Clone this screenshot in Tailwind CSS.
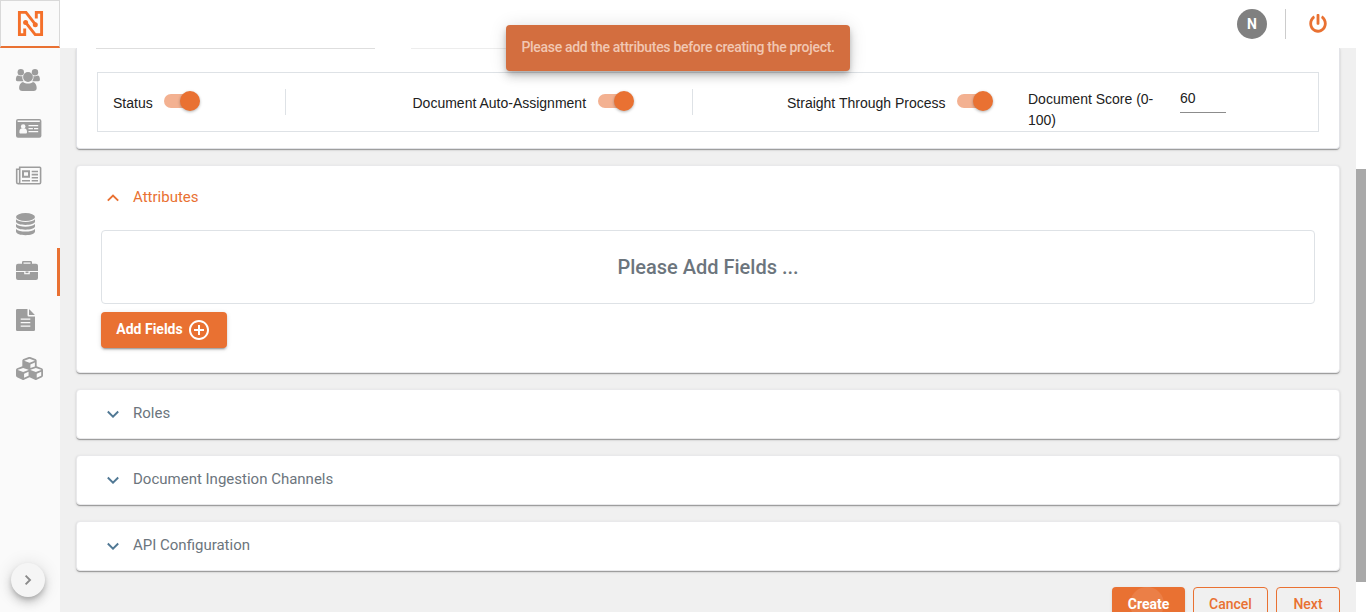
<!DOCTYPE html>
<html lang="en">
<head>
<meta charset="utf-8">
<title>Project</title>
<script src="https://cdn.jsdelivr.net/npm/@tailwindcss/browser@4"></script>
</head>
<body class="relative flex h-[612px] w-[1366px] overflow-hidden bg-white font-['Roboto',sans-serif]">
<aside class="relative flex h-full w-[60px] shrink-0 flex-col bg-[#fafafa] text-[#9d9d9d]">
  <div class="h-12 border border-b-2 border-[#d9d9d9] border-b-[#e97132]">
    <svg class="block h-[45px] w-[58px]" viewBox="1 1 58 45" fill="none" stroke="#f4702a" stroke-width="2.900">
      <path d="M24.700 28.500V34.600H19.400V12.400H26L35.500 24.700M36.300 18.500V12.400H41.600V34.600H35.200L25.600 22.300"/>
      <circle cx="35.300" cy="24.700" r="2.500" fill="#f4702a" stroke="none"/><circle cx="25.600" cy="22.500" r="2.500" fill="#f4702a" stroke="none"/>
    </svg>
  </div>
  <nav class="mt-2 flex flex-col">
    <svg class="h-12 w-[60px]" viewBox="0 0 60 48" fill="currentColor"><circle cx="20.800" cy="16.200" r="3.200"/><circle cx="35" cy="16.200" r="3.200"/><circle cx="28" cy="21" r="4.900"/><path d="M18 19.600c1.500.8 3 .9 4.400.5-.3 2 .1 3.800 1.200 5.200H17.500c-1.200 0-1.700-.8-1.600-2.200.1-1.700.8-3.500 2.100-3.500zM37.800 19.600c-1.500.8-3 .9-4.400.5.3 2-.1 3.800-1.200 5.200h6.100c1.200 0 1.700-.8 1.600-2.200-.1-1.700-.8-3.500-2.100-3.500zM23 25.900c3 2 7 2 10 0 2.500.6 3.700 3.100 3.700 6.100 0 2-1.200 3-3 3H22.300c-2 0-3.200-1-3.200-3 0-3 1.300-5.500 3.900-6.100z"/></svg>
    <svg class="h-12 w-[60px]" viewBox="0 0 60 48" fill="currentColor"><rect x="16" y="15" width="25.400" height="18.800" rx="2"/><g fill="#fafafa"><path d="M17.600 16.600h22.200v1.300H17.600zM28.500 21h9.700v1.200h-9.700zM28.500 24h4.400v1.200h-4.400zM34 24h4.200v1.200H34zM28.500 27h9.700v1.200h-9.700z"/><circle cx="23.200" cy="22.600" r="2.300"/><path d="M21.300 24.600h3.800c1.400.4 1.900 1.700 1.900 3.600 0 .9-.5 1.400-1.300 1.400h-5c-.8 0-1.300-.5-1.300-1.400 0-1.900.5-3.200 1.900-3.600z"/></g></svg>
    <svg class="h-12 w-[60px]" viewBox="0 1.400 60 48" fill="none" stroke="currentColor" stroke-width="1.600"><path d="M19.700 18.300V16.700h20.100q.8 0 .8.800v14.500q0 1.200-1.200 1.200H18.300q-1.600 0-1.600-1.600V18.600h3V31.600q0 1.600-1.400 1.600"/><path d="M23 20.600h6v5.500h-6z" stroke-width="2"/><path d="M22 30.200h8M31.700 20.900h6.300M31.700 24h6.300M31.700 27.100h6.300M31.700 30.200h6.300"/></svg>
    <svg class="h-12 w-[60px]" viewBox="0 0 60 48" fill="currentColor"><ellipse cx="25.500" cy="17" rx="9.500" ry="4"/><path d="M16 19.300c3.500 3.500 15.500 3.500 19 0v2.200c0 4.500-19 4.500-19 0z"/><path d="M16 24.100c3.500 3.500 15.500 3.500 19 0v2.200c0 4.500-19 4.500-19 0zM16 28.900c3.500 3.500 15.500 3.500 19 0v2.600c0 4.900-19 4.900-19 0z"/></svg>
    <div class="h-12 border-r-3 border-[#e97132]"><svg class="h-12 w-[57px]" viewBox="0 0 57 48" fill="currentColor"><path fill-rule="evenodd" d="M22 15.800V14.300q0-1.300 1.300-1.300h7.400q1.300 0 1.300 1.300v1.500h4q2 0 2 2V23H16v-5.200q0-2 2-2zM23.500 15.800h7V14.400h-7z"/><path d="M16 24h8.200v2.300h5.600V24H38v6q0 2-2 2H18q-2 0-2-2z"/><path d="M25.500 23.500h3v1.600h-3z"/></svg></div>
    <svg class="h-12 w-[60px]" viewBox="0 0 60 48" fill="currentColor"><path d="M17.200 13H27.500v6.300q0 1.200 1.200 1.200H35v13.300q0 1.200-1.200 1.200H17.200Q16 35 16 33.800V14.200Q16 13 17.200 13zM29 13.300q.3 0 .8.500l4.600 4.600q.4.400.4.600H29z"/><path d="M20.700 23.200h9.600M20.700 26.600h9.600M20.700 30.100h9.600" stroke="#fafafa" stroke-width="1.200"/></svg>
    <div class="flex h-12 items-center pl-4"><svg class="h-[23px] w-[27px]" viewBox="0 32 512 448" preserveAspectRatio="none" fill="currentColor"><path d="M488.600 250.200L392 214V105.500c0-15-9.300-28.400-23.400-33.700l-100-37.500c-8.100-3.100-17.100-3.100-25.300 0l-100 37.500c-14.100 5.300-23.400 18.700-23.400 33.700V214l-96.600 36.200C9.300 255.500 0 268.900 0 283.900V394c0 13.600 7.700 26.100 19.900 32.200l100 50c10.100 5.100 22.100 5.100 32.200 0l103.900-52 103.900 52c10.100 5.100 22.100 5.100 32.200 0l100-50c12.200-6.100 19.900-18.600 19.900-32.200V283.900c0-15-9.300-28.400-23.400-33.700zM358 214.800l-85 31.900v-68.200l85-37v73.300zM154 104.100l102-38.200 102 38.200v.6l-102 41.400-102-41.400v-.6zm84 291.100l-85 42.500v-79.100l85-38.800v75.400zm0-112l-102 41.400-102-41.400v-.6l102-38.200 102 38.200v.6zm240 112l-85 42.500v-79.100l85-38.800v75.400zm0-112l-102 41.400-102-41.400v-.6l102-38.200 102 38.200v.6z"/></svg></div>
  </nav>
  <button class="mt-auto mb-[15px] ml-[11px] flex size-[34px] items-center justify-center rounded-full bg-[#f5f5f5] shadow-[0_3px_5px_-1px_rgba(0,0,0,.2),0_6px_10px_rgba(0,0,0,.14),0_1px_18px_rgba(0,0,0,.12)]"><svg class="h-3 w-2" viewBox="0 0 8 12" fill="none" stroke="#8a8a8a" stroke-width="1.900"><path d="M1.600 1.600 6 6l-4.400 4.400"/></svg></button>
</aside>
<div class="flex min-w-0 flex-1 flex-col">
  <header class="flex h-12 shrink-0 items-center justify-end bg-white pr-[39px]">
    <div class="flex size-[30px] items-center justify-center rounded-full bg-[#808080] text-[14px] font-bold text-white">N</div>
    <div class="ml-[18px] h-[30px] w-px bg-[#ccc]"></div>
    <svg class="-mt-px ml-[23px] h-[19px] w-[18px]" viewBox="0 0 512 512" preserveAspectRatio="none" fill="#e97132"><path d="M400 54.100c63 45 104 118.600 104 201.900 0 136.800-110.800 247.700-247.500 248C120 504.300 8.200 393 8 256.400 7.900 173.100 48.900 99.300 111.800 54.200c11.700-8.300 28-4.800 35 7.700L162.600 90c5.900 10.500 3.100 23.800-6.600 31-41.500 30.800-68 79.600-68 134.900-.1 92.300 74.500 168.100 168 168.100 91.600 0 168.600-74.200 168-169.100-.3-51.800-24.700-101.800-68.100-134-9.700-7.200-12.400-20.500-6.500-30.900l15.800-28.100c7-12.400 23.200-16.100 34.800-7.800zM296 264V24c0-13.300-10.700-24-24-24h-32c-13.300 0-24 10.700-24 24v240c0 13.300 10.700 24 24 24h32c13.300 0 24-10.700 24-24z"/></svg>
  </header>
  <div class="flex h-[564px]">
    <main class="flex w-[1296px] flex-col gap-4 overflow-hidden bg-[#f0f0f0] px-4 text-[15px] text-[#6c757d]">
      <section class="h-[101px] shrink-0 rounded-b border-x border-b border-[#e2e3e7] bg-white px-[19px] font-['Liberation_Sans',sans-serif] text-[14px] text-[#212121] shadow-[0_2px_1px_-1px_rgba(0,0,0,.2),0_1px_1px_rgba(0,0,0,.14),0_1px_3px_rgba(0,0,0,.12)]">
        <div class="flex h-6 gap-9"><div class="h-px w-[279px] bg-[#dedede]"></div><div class="h-px w-[279px] bg-[#ededed]"></div></div>
        <div class="ml-px flex h-[60px] w-[1222px] border border-[#dee2e6] pl-[15px]">
          <div class="flex pt-4">
            <span class="w-[51px] pt-1 leading-[21px]">Status</span>
            <div class="flex h-6 w-9 items-center"><div class="flex h-[14px] w-[35px] items-center justify-end rounded-full bg-[#f3b191]"><i class="-mr-px size-5 shrink-0 rounded-full bg-[#e97132] shadow-[0_1px_3px_rgba(0,0,0,.3)]"></i></div></div>
            <div class="ml-[85px] h-[26px] w-px bg-[#dee2e6]"></div>
          </div>
          <div class="flex pt-4 pl-[126.500px]">
            <span class="w-[185.500px] pt-1 leading-[21px] whitespace-nowrap">Document Auto-Assignment</span>
            <div class="flex h-6 w-9 items-center"><div class="flex h-[14px] w-[35px] items-center justify-end rounded-full bg-[#f3b191]"><i class="-mr-px size-5 shrink-0 rounded-full bg-[#e97132] shadow-[0_1px_3px_rgba(0,0,0,.3)]"></i></div></div>
            <div class="ml-[58px] h-[26px] w-px bg-[#dee2e6]"></div>
          </div>
          <div class="flex pt-4 pl-[94px]">
            <span class="w-[170px] pt-1 leading-[21px] whitespace-nowrap">Straight Through Process</span>
            <div class="flex h-6 w-9 items-center"><div class="flex h-[14px] w-[35px] items-center justify-end rounded-full bg-[#f3b191]"><i class="-mr-px size-5 shrink-0 rounded-full bg-[#e97132] shadow-[0_1px_3px_rgba(0,0,0,.3)]"></i></div></div>
          </div>
          <div class="ml-[35px] w-[130px] pt-4 leading-[21px]">Document Score (0-<br>100)</div>
          <div class="mt-4 ml-[22px] h-6 w-[46px] border-b border-[#8c8c8c] leading-[19px]">60</div>
        </div>
      </section>
      <section class="h-[208px] shrink-0 rounded border border-[#e9e9eb] bg-white px-6 pt-[19px] shadow-[0_2px_1px_-1px_rgba(0,0,0,.2),0_1px_1px_rgba(0,0,0,.14),0_1px_3px_rgba(0,0,0,.12)]">
        <div class="flex h-6 items-center gap-[14px] pl-[6px] text-[#e97132]"><svg class="mt-[2px] h-2 w-3" viewBox="0 0 12 8" fill="none" stroke="currentColor" stroke-width="1.900"><path d="M.8 6.700 6 1.500l5.200 5.200"/></svg><span>Attributes</span></div>
        <div class="mt-[21px] flex h-[74px] items-center justify-center rounded border border-[#dee2e6] text-[20px] font-medium">Please Add Fields ...</div>
        <button class="mt-2 flex h-9 w-[126px] items-center justify-center gap-1 rounded bg-[#e97132] pr-px text-[14px] font-bold text-white shadow-[0_3px_1px_-2px_rgba(0,0,0,.2),0_2px_2px_rgba(0,0,0,.14),0_1px_5px_rgba(0,0,0,.12)]"><span class="mb-[2px]">Add Fields</span><svg class="size-[24px]" viewBox="0 0 24 24" fill="currentColor"><path d="M13 7h-2v4H7v2h4v4h2v-4h4v-2h-4V7zm-1-5C6.480 2 2 6.480 2 12s4.480 10 10 10 10-4.480 10-10S17.520 2 12 2zm0 18c-4.410 0-8-3.590-8-8s3.590-8 8-8 8 3.590 8 8-3.590 8-8 8z"/></svg></button>
      </section>
      <section class="flex h-[50px] shrink-0 items-center gap-[14px] rounded border border-[#e9e9eb] bg-white pb-[2px] pl-[30px] shadow-[0_2px_1px_-1px_rgba(0,0,0,.2),0_1px_1px_rgba(0,0,0,.14),0_1px_3px_rgba(0,0,0,.12)]"><svg class="mt-px h-2 w-3" viewBox="0 0 12 8" fill="none" stroke="#507894" stroke-width="1.900"><path d="M.8 1.500 6 6.700l5.200-5.200"/></svg><span>Roles</span></section>
      <section class="flex h-[50px] shrink-0 items-center gap-[14px] rounded border border-[#e9e9eb] bg-white pb-[2px] pl-[30px] shadow-[0_2px_1px_-1px_rgba(0,0,0,.2),0_1px_1px_rgba(0,0,0,.14),0_1px_3px_rgba(0,0,0,.12)]"><svg class="mt-px h-2 w-3" viewBox="0 0 12 8" fill="none" stroke="#507894" stroke-width="1.900"><path d="M.8 1.500 6 6.700l5.200-5.200"/></svg><span>Document Ingestion Channels</span></section>
      <section class="flex h-[50px] shrink-0 items-center gap-[14px] rounded border border-[#e9e9eb] bg-white pb-[2px] pl-[30px] shadow-[0_2px_1px_-1px_rgba(0,0,0,.2),0_1px_1px_rgba(0,0,0,.14),0_1px_3px_rgba(0,0,0,.12)]"><svg class="mt-px h-2 w-3" viewBox="0 0 12 8" fill="none" stroke="#507894" stroke-width="1.900"><path d="M.8 1.500 6 6.700l5.200-5.200"/></svg><span>API Configuration</span></section>
      <div class="flex shrink-0 justify-end gap-2 text-[14px] font-bold text-[#e97132]">
        <button class="relative h-9 w-[73px] overflow-hidden rounded bg-[#e97132] pb-[2px] text-white shadow"><i class="absolute top-0 left-[18px] size-[34px] rounded-full bg-white/10"></i><span class="relative">Create</span></button>
        <button class="h-9 w-[75px] rounded border border-[#e97132] pb-[2px] font-medium">Cancel</button>
        <button class="h-9 w-16 rounded border border-[#e97132] pb-[2px] font-medium">Next</button>
      </div>
    </main>
    <div class="w-[10px] bg-white pt-[121px]"><div class="h-[413px] bg-[#a9a9a9]"></div></div>
  </div>
</div>
<div class="absolute top-[25px] left-[506px] flex h-[46px] w-[344px] items-center justify-center rounded bg-[#d36e3f] pb-px text-[14px] font-medium tracking-[-.3px] whitespace-nowrap text-[#f1c7b2] shadow-[0_3px_5px_-1px_rgba(0,0,0,.2),0_6px_10px_rgba(0,0,0,.14),0_1px_18px_rgba(0,0,0,.12)]">Please add the attributes before creating the project.</div>
</body>
</html>
